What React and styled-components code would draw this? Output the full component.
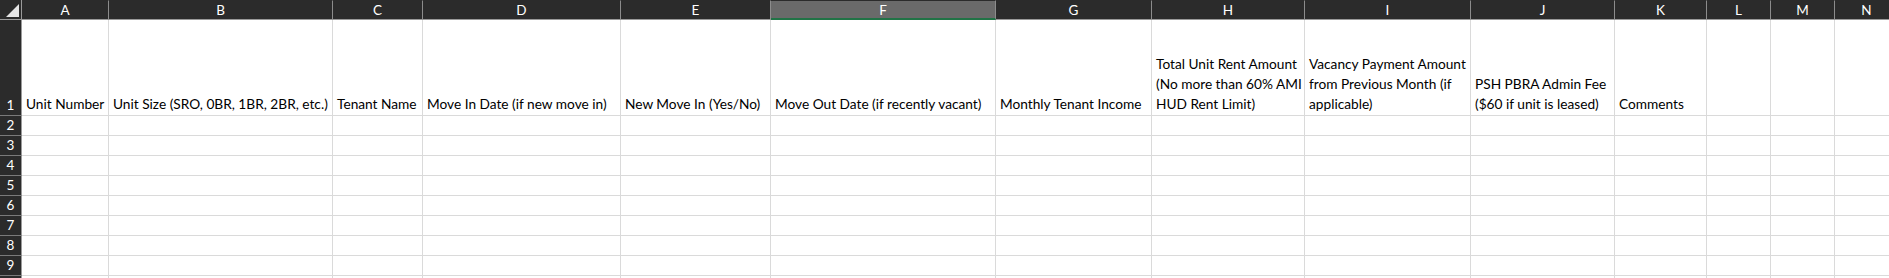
import React from "react";
import styled, { createGlobalStyle } from "styled-components";

const GlobalStyle = createGlobalStyle`
    html, body {
        margin: 0;
        padding: 0;
        background: #ffffff;
        overflow: hidden;
    }
`;

const columns = [
    { letter: "A", width: 87, title: ["Unit Number"] },
    { letter: "B", width: 224, title: ["Unit Size (SRO, 0BR, 1BR, 2BR, etc.)"] },
    { letter: "C", width: 90, title: ["Tenant Name"] },
    { letter: "D", width: 198, title: ["Move In Date (if new move in)"] },
    { letter: "E", width: 150, title: ["New Move In (Yes/No)"] },
    { letter: "F", width: 225, title: ["Move Out Date (if recently vacant)"], active: true },
    { letter: "G", width: 156, title: ["Monthly Tenant Income"] },
    { letter: "H", width: 153, title: ["Total Unit Rent Amount", "(No more than 60% AMI", "HUD Rent Limit)"] },
    { letter: "I", width: 166, title: ["Vacancy Payment Amount", "from Previous Month (if", "applicable)"] },
    { letter: "J", width: 144, title: ["PSH PBRA Admin Fee", "($60 if unit is leased)"] },
    { letter: "K", width: 92, title: ["Comments"] },
    { letter: "L", width: 64, title: [] },
    { letter: "M", width: 64, title: [] },
    { letter: "N", width: 64, title: [] },
];

const emptyRows = [2, 3, 4, 5, 6, 7, 8, 9, 10];

const Sheet = styled.div`
    display: grid;
    grid-template-columns: 22px ${(p) => p.$cols};
    grid-template-rows: 20px 96px repeat(9, 20px);
    width: max-content;
    font-family: "Lato", "Liberation Sans", sans-serif;
`;

const Corner = styled.div`
    background: #2b2b2b;
    border-right: 1px solid #9a9a9a;
    border-bottom: 1px solid #9a9a9a;
    box-sizing: border-box;
    display: flex;
    align-items: flex-end;
    justify-content: flex-end;
    padding: 0 2px 2px 0;
`;

const ColHead = styled.div`
    background: ${(p) => (p.$active ? "#6a6a6a" : "#2b2b2b")};
    border-top: 1px solid #2b2b2b;
    border-right: 1px solid #8c8c8c;
    border-bottom: ${(p) => (p.$active ? "2px solid #217346" : "1px solid #9a9a9a")};
    box-sizing: border-box;
    color: #ffffff;
    font-size: 13.5px;
    display: flex;
    align-items: center;
    justify-content: center;
`;

const RowHead = styled.div`
    background: #2b2b2b;
    border-right: 1px solid #9a9a9a;
    border-bottom: 1px solid #7a7a7a;
    box-sizing: border-box;
    color: #ffffff;
    font-size: 13.5px;
    display: flex;
    align-items: flex-end;
    justify-content: center;
    padding-bottom: 1px;
    line-height: 18px;
`;

const Cell = styled.div`
    border-right: 1px solid #dadada;
    border-bottom: 1px solid #dadada;
    box-sizing: border-box;
    color: #000000;
    font-size: 13.7px;
    line-height: 20px;
    padding: 0 3px 1px 4px;
    display: flex;
    flex-direction: column;
    justify-content: flex-end;
    white-space: nowrap;
`;

export default function App() {
    const cols = columns.map((c) => `${c.width}px`).join(" ");
    return (
        <>
            <GlobalStyle />
            <Sheet $cols={cols}>
                <Corner>
                    <svg width="13" height="13" viewBox="0 0 13 13">
                        <polygon points="13,0 13,13 0,13" fill="#e6e6e6" />
                    </svg>
                </Corner>
                {columns.map((c) => (
                    <ColHead key={c.letter} $active={c.active}>
                        {c.letter}
                    </ColHead>
                ))}

                <RowHead>1</RowHead>
                {columns.map((c) => (
                    <Cell key={c.letter}>
                        {c.title.map((line) => (
                            <span key={line}>{line}</span>
                        ))}
                    </Cell>
                ))}

                {emptyRows.map((r) => (
                    <React.Fragment key={r}>
                        <RowHead>{r}</RowHead>
                        {columns.map((c) => (
                            <Cell key={c.letter} />
                        ))}
                    </React.Fragment>
                ))}
            </Sheet>
        </>
    );
}
